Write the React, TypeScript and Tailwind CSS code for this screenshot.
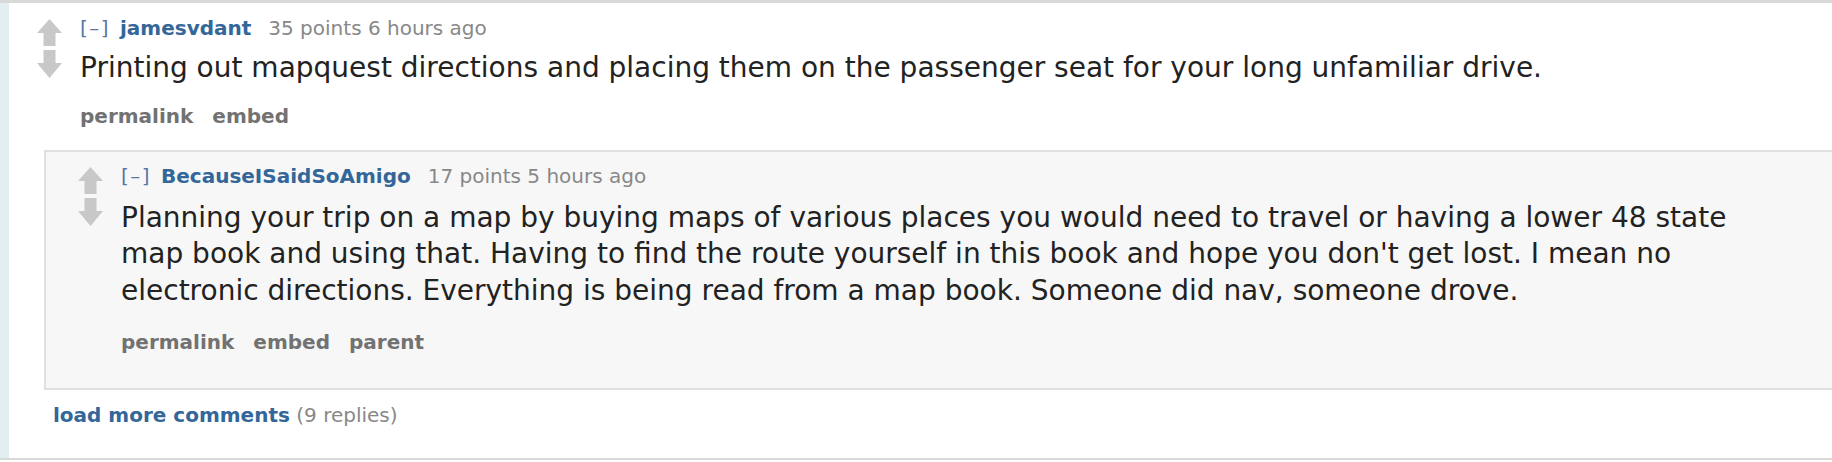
import React from "react";

function UpArrow() {
  return (
    <svg width="25" height="27" viewBox="0 0 25 27" className="block">
      <polygon points="12.5,0 25,14 18.5,14 18.5,27 6.5,27 6.5,14 0,14" fill="#c8c8c8" />
    </svg>
  );
}

function DownArrow() {
  return (
    <svg width="25" height="28" viewBox="0 0 25 28" className="block">
      <polygon points="6.5,0 18.5,0 18.5,13 25,13 12.5,28 0,13 6.5,13" fill="#c8c8c8" />
    </svg>
  );
}

function Arrows() {
  return (
    <div className="flex w-[44px] shrink-0 flex-col gap-[4px] pt-[3px] pl-[1px]">
      <UpArrow />
      <DownArrow />
    </div>
  );
}

function Tagline({ name, points, time }: { name: string; points: string; time: string }) {
  return (
    <div className="flex whitespace-nowrap text-[20px] leading-[24px]">
      <span className="inline-block w-[40px] tracking-[1.5px] text-[#5a77a3]">[–]</span>
      <span className="font-bold text-[#336699]">{name}</span>
      <span className="ml-[17px] text-[#888888]">
        {points} {time}
      </span>
    </div>
  );
}

function Buttons({ items }: { items: string[] }) {
  return (
    <div className="flex gap-[19px] whitespace-nowrap text-[20px] font-bold leading-[24px] text-[#727272]">
      {items.map((t) => (
        <span key={t}>{t}</span>
      ))}
    </div>
  );
}

export default function App() {
  return (
    <div className="h-[462px] w-[1832px] overflow-hidden bg-white font-['DejaVu_Sans',Verdana,sans-serif]">
      <div className="flex h-[460px] border-t-[3px] border-b-[2px] border-[#d9d9d9]">
        <div className="w-[9px] shrink-0 bg-[#e2eef0]" />
        <div className="flex min-w-0 flex-1 flex-col">
          {/* main comment */}
          <div className="flex pt-[13px] pl-[27px]">
            <Arrows />
            <div className="flex flex-col">
              <Tagline name="jamesvdant" points="35 points" time="6 hours ago" />
              <div className="mt-[10px] whitespace-nowrap text-[28px] leading-[36.5px] text-[#222222]">
                Printing out mapquest directions and placing them on the passenger seat for your long unfamiliar drive.
              </div>
              <div className="mt-[17px]">
                <Buttons items={["permalink", "embed"]} />
              </div>
            </div>
          </div>

          {/* nested reply */}
          <div className="mt-[22px] ml-[35px] flex border-y-[2px] border-l-[2px] border-[#e0e0e0] bg-[#f7f7f7] pt-[12px] pb-[34px] pl-[31px]">
            <Arrows />
            <div className="flex flex-col">
              <Tagline name="BecauseISaidSoAmigo" points="17 points" time="5 hours ago" />
              <div className="mt-[12px] whitespace-nowrap text-[28px] leading-[36.5px] text-[#222222]">
                <div>Planning your trip on a map by buying maps of various places you would need to travel or having a lower 48 state</div>
                <div>map book and using that. Having to find the route yourself in this book and hope you don't get lost. I mean no</div>
                <div>electronic directions. Everything is being read from a map book. Someone did nav, someone drove.</div>
              </div>
              <div className="mt-[21px]">
                <Buttons items={["permalink", "embed", "parent"]} />
              </div>
            </div>
          </div>

          {/* load more */}
          <div className="mt-[13px] ml-[44px] whitespace-nowrap text-[20px] leading-[24px]">
            <span className="font-bold text-[#336699]">load more comments</span>
            <span className="text-[#888888]"> (9 replies)</span>
          </div>
        </div>
      </div>
    </div>
  );
}
